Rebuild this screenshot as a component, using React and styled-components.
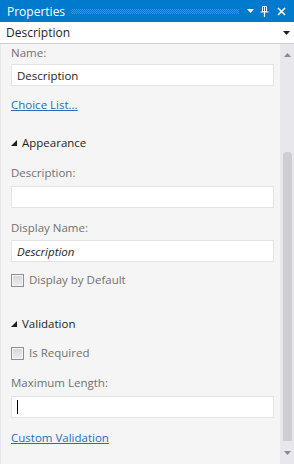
import React from 'react';
import styled, { createGlobalStyle } from 'styled-components';

const GlobalStyle = createGlobalStyle`
  html, body {
    margin: 0;
    padding: 0;
    background: #f5f5f5;
  }
  body {
    font-family: "Open Sans", "Noto Sans", sans-serif;
    font-size: 11.5px;
  }
`

const Panel = styled.div`
  display: flex;
  flex-direction: column;
  width: 294px;
  height: 464px;
  overflow: hidden;
  background: #f5f5f5;
`

const TitleBar = styled.div`
  display: flex;
  align-items: center;
  height: 22px;
  padding: 0 4px 0 7px;
  background: #007acc;
  color: #ffffff;
  font-size: 12px;
`

const TitleText = styled.span`
  margin-right: 6px;
`

const Dots = styled.div`
  flex: 1;
  height: 5px;
  margin-right: 4px;
  background: repeating-conic-gradient(#3597d9 0 25%, transparent 0 50%) 0 0 / 2px 2px;
`

const TitleButton = styled.div`
  display: flex;
  align-items: center;
  justify-content: center;
  width: ${p => p.$w || 15}px;
  height: 22px;
`

const Combo = styled.div`
  display: flex;
  align-items: center;
  justify-content: space-between;
  height: 21px;
  padding: 0 4px 0 6px;
  background: #ffffff;
  border-bottom: 1px solid #cccedb;
  color: #1e1e1e;
  font-size: 12px;
`

const Body = styled.div`
  display: flex;
  flex: 1;
  min-height: 0;
`

const Content = styled.div`
  flex: 1;
  display: flex;
  flex-direction: column;
  padding: 1px 6px 0 10px;
  border-left: 1px solid #e6e6e6;
`

const Label = styled.div`
  line-height: 16px;
  color: #717171;
  margin-top: ${p => p.$mt || 0}px;
`

const Field = styled.div`
  display: flex;
  align-items: center;
  box-sizing: border-box;
  height: 22px;
  margin-top: ${p => p.$mt || 0}px;
  padding-left: 5px;
  background: #ffffff;
  border: 1px solid #e4e4e4;
  color: #1e1e1e;
  font-style: ${p => (p.$italic ? 'italic' : 'normal')};
`

const Caret = styled.span`
  display: block;
  width: 1px;
  height: 14px;
  background: #000000;
`

const LinkText = styled.a`
  align-self: flex-start;
  line-height: 16px;
  margin-top: ${p => p.$mt || 0}px;
  color: #2a6db5;
  text-decoration: underline;
`

const Section = styled.div`
  display: flex;
  align-items: center;
  gap: 5px;
  line-height: 16px;
  margin-top: ${p => p.$mt || 0}px;
  color: #1e1e1e;
`

const CheckRow = styled.label`
  display: flex;
  align-items: center;
  gap: 5px;
  line-height: 16px;
  margin-top: ${p => p.$mt || 0}px;
  color: #717171;
`

const Box = styled.span`
  display: block;
  box-sizing: border-box;
  width: 13px;
  height: 13px;
  border: 1px solid #8f8f8f;
  background: linear-gradient(#d6d6d6, #eeeeee);
  box-shadow: inset 0 0 0 1px #f4f4f4;
`

const ScrollBar = styled.div`
  display: flex;
  flex-direction: column;
  width: 14px;
  background: #e8e8ec;
`

const ArrowButton = styled.div`
  display: flex;
  align-items: center;
  justify-content: center;
  height: 22px;
`

const Track = styled.div`
  flex: 1;
  display: flex;
  flex-direction: column;
  padding: 86px 2px 1px 3px;
`

const Thumb = styled.div`
  flex: 1;
  background: #cdcdd3;
  border-radius: 4px 4px 0 0;
`

const Triangle = ({ down, color = '#868999' }) => (
  <svg width="7" height="4" viewBox="0 0 7 4">
    <polygon points={down ? '0,0 7,0 3.5,4' : '0,4 7,4 3.5,0'} fill={color} />
  </svg>
)

const Expander = () => (
  <svg width="6" height="6" viewBox="0 0 6 6">
    <polygon points="6,0 6,6 0,6" fill="#1e1e1e" />
  </svg>
)

const PinIcon = () => (
  <svg width="9" height="11" viewBox="0 0 9 11">
    <path d="M2.5 0.5h4v5h-4z M4.5 1v4.5" fill="none" stroke="#fff" strokeWidth="1" />
    <path d="M0.5 6h8M4.5 6v5" stroke="#fff" strokeWidth="1.2" />
  </svg>
)

const CloseIcon = () => (
  <svg width="9" height="9" viewBox="0 0 9 9">
    <path d="M1 1L8 8M8 1L1 8" stroke="#fff" strokeWidth="1.6" />
  </svg>
)

export default function App() {
  return (
    <Panel>
      <GlobalStyle />
      <TitleBar>
        <TitleText>Properties</TitleText>
        <Dots />
        <TitleButton $w={14}>
          <Triangle down color="#ffffff" />
        </TitleButton>
        <TitleButton>
          <PinIcon />
        </TitleButton>
        <TitleButton $w={18}>
          <CloseIcon />
        </TitleButton>
      </TitleBar>
      <Combo>
        <span>Description</span>
        <Triangle down color="#1e1e1e" />
      </Combo>
      <Body>
        <Content>
          <Label>Name:</Label>
          <Field $mt={3}>Description</Field>
          <LinkText $mt={11}>Choice List...</LinkText>

          <Section $mt={22}>
            <Expander />
            Appearance
          </Section>
          <Label $mt={14}>Description:</Label>
          <Field $mt={5} />
          <Label $mt={12}>Display Name:</Label>
          <Field $mt={4} $italic>Description</Field>
          <CheckRow $mt={10}>
            <Box />
            Display by Default
          </CheckRow>

          <Section $mt={28}>
            <Expander />
            Validation
          </Section>
          <CheckRow $mt={13}>
            <Box />
            Is Required
          </CheckRow>
          <Label $mt={14}>Maximum Length:</Label>
          <Field $mt={5}>
            <Caret />
          </Field>
          <LinkText $mt={12}>Custom Validation</LinkText>
        </Content>
        <ScrollBar>
          <ArrowButton>
            <Triangle />
          </ArrowButton>
          <Track>
            <Thumb />
          </Track>
          <ArrowButton>
            <Triangle down />
          </ArrowButton>
        </ScrollBar>
      </Body>
    </Panel>
  )
}
